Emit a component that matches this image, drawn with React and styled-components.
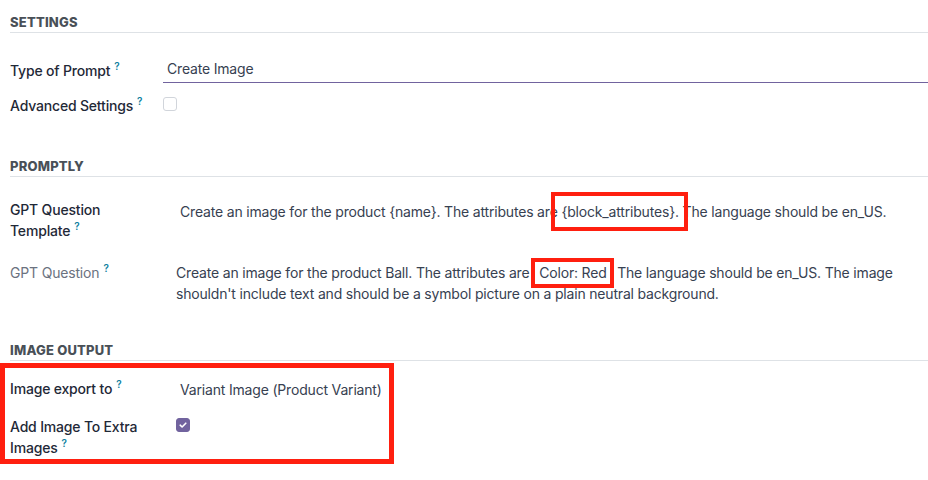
import React from "react";
import styled, { createGlobalStyle } from "styled-components";

const GlobalStyle = createGlobalStyle`
  html, body { margin: 0; padding: 0; background: #fff; }
  body {
    font-family: Inter, "Noto Sans", "Liberation Sans", sans-serif;
    font-size: 14px;
    letter-spacing: -0.18px;
    color: #374151;
    -webkit-font-smoothing: antialiased;
  }
  * { box-sizing: border-box; }
`;

const Page = styled.div`
  width: 928px;
  padding-left: 10px;
`;

const Section = styled.section`
  margin-top: ${(p) => p.$top}px;
`;

const Heading = styled.h2`
  margin: 0;
  font-size: 13px;
  font-weight: 800;
  line-height: 20px;
  letter-spacing: 0.2px;
  text-transform: uppercase;
  color: #495057;
  border-bottom: 1px solid #dee2e6;
`;

const Row = styled.div`
  display: grid;
  grid-template-columns: ${(p) => p.$labelW}px 1fr;
  align-items: ${(p) => (p.$center ? "center" : "start")};
  margin-top: ${(p) => p.$top}px;
`;

const Label = styled.label`
  font-weight: ${(p) => (p.$muted ? 400 : 500)};
  color: ${(p) => (p.$muted ? "#6b7280" : "#1f2937")};
  line-height: 21px;
`;

const Help = styled.sup`
  color: #0e7fa0;
  font-size: 10px;
  font-weight: 600;
  margin-left: 4px;
  vertical-align: super;
  line-height: 0;
`;

const Value = styled.div`
  line-height: 21px;
  color: #374151;
  padding-left: ${(p) => p.$padL || 0}px;
  padding-top: ${(p) => p.$padT || 0}px;
`;

const Input = styled.div`
  line-height: 21px;
  padding: 1px 4px 3px;
  color: #374151;
  border-bottom: 1px solid #71639e;
`;

const Box = styled.span`
  display: inline-flex;
  align-items: center;
  justify-content: center;
  width: 14px;
  height: 14px;
  border-radius: 3px;
  margin-top: ${(p) => p.$top || 0}px;
  border: 1px solid ${(p) => (p.$checked ? "#71639e" : "#d1d5db")};
  background: ${(p) => (p.$checked ? "#71639e" : "#fff")};
`;

const Mark = styled.span`
  position: relative;
  margin-left: ${(p) => p.$ml || 0}px;
  margin-right: ${(p) => p.$mr || 0}px;
  &::after {
    content: "";
    position: absolute;
    left: ${(p) => p.$l}px;
    right: ${(p) => p.$r}px;
    top: ${(p) => p.$t}px;
    bottom: ${(p) => p.$b}px;
    border: 4px solid #ff1f0f;
    pointer-events: none;
  }
`;

const Highlight = styled.div`
  margin-left: -10px;
  margin-top: 2px;
  width: 394px;
  border: 5px solid #ff1f0f;
  padding: 10px 0 1px 5px;
`;

const Checkbox = ({ checked, top }) => (
  <Box $checked={checked} $top={top}>
    {checked && (
      <svg width="10" height="10" viewBox="0 0 10 10">
        <path d="M2.2 5.2 L4.1 7 L7.8 3.2" fill="none" stroke="#fff" strokeWidth="1.6" strokeLinecap="round" strokeLinejoin="round" />
      </svg>
    )}
  </Box>
);

export default function App() {
  return (
    <>
      <GlobalStyle />
      <Page>
        <Section $top={12}>
          <Heading>Settings</Heading>
          <Row $labelW={153} $center $top={24}>
            <Label>Type of Prompt<Help>?</Help></Label>
            <Input>Create Image</Input>
          </Row>
          <Row $labelW={153} $center $top={12}>
            <Label>Advanced Settings<Help>?</Help></Label>
            <div><Checkbox /></div>
          </Row>
        </Section>

        <Section $top={40}>
          <Heading>Promptly</Heading>
          <Row $labelW={166} $top={22}>
            <Label>GPT Question<br />Template<Help>?</Help></Label>
            <Value $padL={4} $padT={2}>
              Create an image for the product {"{name}"}. The attributes are{" "}
              <Mark $l={-10} $r={-9} $t={-11} $b={-11}>{"{block_attributes}."}</Mark> The language should be en_US.
            </Value>
          </Row>
          <Row $labelW={166} $top={21}>
            <Label $muted>GPT Question<Help>?</Help></Label>
            <Value>
              Create an image for the product Ball. The attributes are{" "}
              <Mark $ml={6} $mr={3} $l={-8} $r={-7} $t={-6} $b={-7}>Color: Red</Mark>{"\u00a0\u00a0"}The language should be en_US. The image
              shouldn't include text and should be a symbol picture on a plain neutral background.
            </Value>
          </Row>
        </Section>

        <Section $top={36}>
          <Heading>Image Output</Heading>
          <Highlight>
            <Row $labelW={166} $top={0}>
              <Label>Image export to<Help>?</Help></Label>
              <Value $padL={4} $padT={1}>Variant Image (Product Variant)</Value>
            </Row>
            <Row $labelW={166} $top={16}>
              <Label>Add Image To Extra<br />Images<Help>?</Help></Label>
              <div><Checkbox checked top={0} /></div>
            </Row>
          </Highlight>
        </Section>
      </Page>
    </>
  );
}
